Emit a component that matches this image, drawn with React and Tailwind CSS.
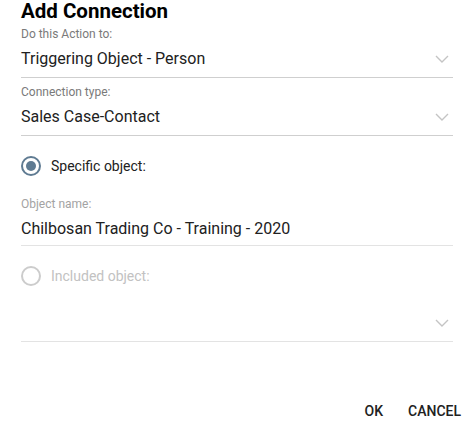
import React from 'react';

function Chevron() {
  return (
    <svg width="14" height="8" viewBox="0 0 14 8" className="shrink-0">
      <path d="M1 1 L7 7 L13 1" fill="none" stroke="#c4c4c4" strokeWidth="1.4" />
    </svg>
  );
}

function SelectField({ label, value, className = '' }) {
  return (
    <div className={`border-b border-[#cfcfcf] pb-[6px] ${className}`}>
      <div className="h-4 text-[12px] leading-4 text-[#7a7a7a]">{label}</div>
      <div className="mt-[5px] flex h-6 items-center justify-between pr-[4px]">
        <span className="text-[16px] leading-6 text-[#212121]">{value}</span>
        <Chevron />
      </div>
    </div>
  );
}

function Radio({ checked, disabled, label, className = '' }) {
  return (
    <div className={`flex h-5 items-center gap-[10px] ${className}`}>
      <div
        className={`flex h-5 w-5 items-center justify-center rounded-full border-2 ${
          disabled ? 'border-[#cccccc]' : 'border-[#5f7b92]'
        }`}
      >
        {checked && <div className="h-[10px] w-[10px] rounded-full bg-[#5f7b92]" />}
      </div>
      <span className={`text-[14px] leading-5 ${disabled ? 'text-[#c2c2c2]' : 'text-[#212121]'}`}>{label}</span>
    </div>
  );
}

export default function App() {
  return (
    <div className="h-[423px] w-[476px] bg-white" style={{ fontFamily: 'Roboto, "Liberation Sans", sans-serif' }}>
      <div className="ml-[21px] w-[432px]">
        <h1 className="h-[22px] text-[20.5px] font-bold leading-[22px] text-black">Add Connection</h1>

        <SelectField className="mt-[4px]" label="Do this Action to:" value="Triggering Object - Person" />
        <SelectField className="mt-[6px]" label="Connection type:" value="Sales Case-Contact" />

        <Radio className="mt-[20px]" checked label="Specific object:" />

        <div className="mt-[20px] border-b border-[#e3e3e3] pb-[4px]">
          <div className="h-4 text-[12px] leading-4 text-[#a3a3a3]">Object name:</div>
          <div className="mt-[5px] h-6 text-[16px] leading-6 text-[#212121]">Chilbosan Trading Co - Training - 2020</div>
        </div>

        <Radio className="mt-[20px]" disabled label="Included object:" />

        <div className="mt-[25px] flex h-[31px] items-center justify-end border-b border-[#e3e3e3] pb-[6px] pr-[4px]">
          <Chevron />
        </div>
      </div>

      <div className="mt-[59px] flex justify-end gap-[25px] pr-[15px]">
        <button className="h-5 text-[14px] font-medium uppercase leading-5 text-[#212121]">OK</button>
        <button className="h-5 text-[14px] font-medium uppercase leading-5 text-[#212121]">Cancel</button>
      </div>
    </div>
  );
}
